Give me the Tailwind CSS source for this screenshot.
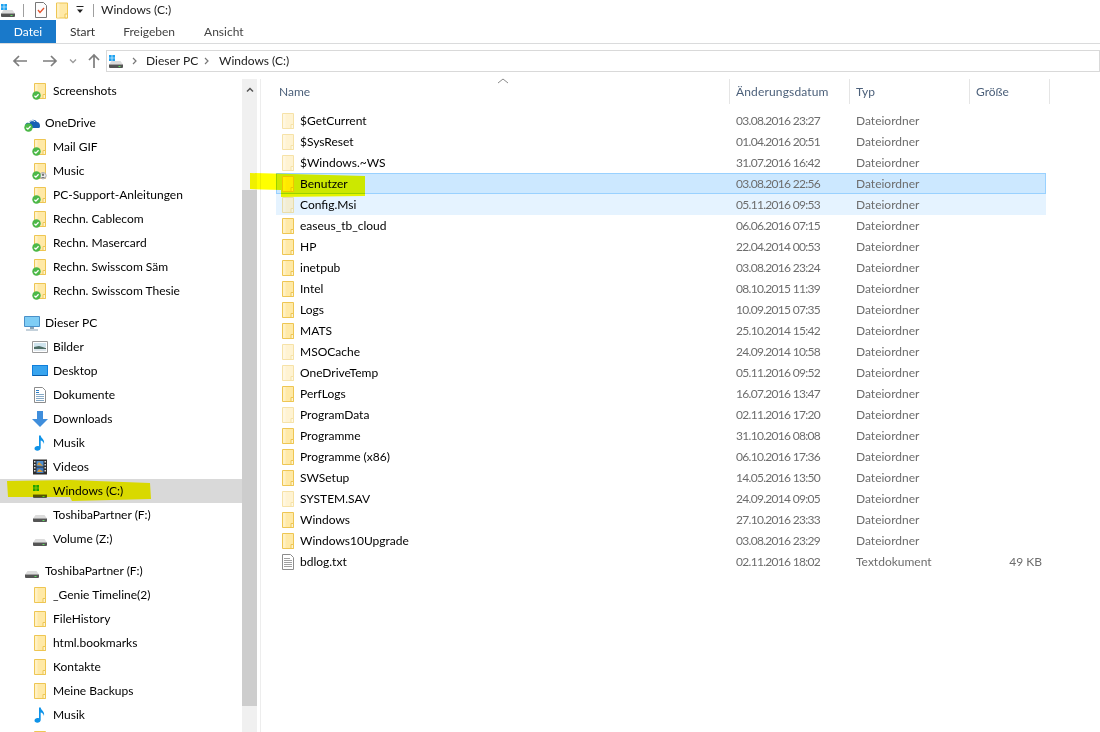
<!DOCTYPE html>
<html lang="de">
<head>
  <meta charset="UTF-8">
  <title>Windows (C:)</title>
  <script src="https://cdn.jsdelivr.net/npm/@tailwindcss/browser@4"></script>
</head>
<body class="bg-white text-black text-[12px] font-['Lato','Noto_Sans',sans-serif] overflow-hidden">
  <svg class="hidden">
    <symbol id="folder" viewBox="0 0 16 16">
      <path d="M2.500.5h11v15h-11z" fill="#ffe9a6" stroke="#eec653"/>
      <path d="M11 15.500v-4h2.500v4z" fill="#fff4cf" stroke="#eec653"/>
      <path d="M3 1h2.500v14H3z" fill="#fff1c4"/>
    </symbol>
    <symbol id="check" viewBox="0 0 10 10">
      <circle cx="5" cy="5" r="4.700" fill="#4cb848"/>
      <path d="M2.700 5.200l1.600 1.600 3-3.200" fill="none" stroke="#fff" stroke-width="1.400"/>
    </symbol>
    <symbol id="drive" viewBox="0 0 16 16">
      <path d="M3.500 8h9l2.500 3.500H1z" fill="#dcdcdc"/>
      <path d="M1 11h14v3a1 1 0 0 1-1 1H2a1 1 0 0 1-1-1z" fill="#555"/>
      <path d="M1 11h14v1H1z" fill="#a0a0a0"/>
      <path d="M10.500 13h2v1h-2z" fill="#5fe05f"/>
    </symbol>
    <symbol id="win" viewBox="0 0 16 16">
      <path d="M1 2h2.700v2.700H1zM4.300 2H7v2.700H4.300zM1 5.300h2.700V8H1zM4.300 5.300H7V8H4.300z" fill="#1fa2f0"/>
    </symbol>
    <symbol id="note" viewBox="0 0 16 16">
      <path d="M7 .5h1.700c.3 3 4.300 3.500 3.300 8.500-.5-2.500-2-3.300-3.300-3.500V13c0 1.600-1.600 2.700-3.400 2.700C3.600 15.700 2.500 14.800 2.500 13.500s1.500-2.500 3-2.500c.6 0 1.100.1 1.500.3z" fill="#0f93e8"/>
    </symbol>
  </svg>

  <div class="relative w-[1100px] h-[732px] overflow-hidden flex flex-col">
    <!-- titlebar -->
    <div class="flex items-center h-5 shrink-0">
      <svg class="w-4 h-4"><use href="#drive"/><use href="#win"/></svg>
      <div class="w-px h-[13px] bg-[#9f9f9f] ml-[7px]"></div>
      <svg class="w-4 h-4 ml-[9px]" viewBox="0 0 16 16"><path d="M2.500.5h8l3 3v12h-11z" fill="#fdfdfd" stroke="#777"/><path d="M5 8l2 2.500L11 6" fill="none" stroke="#e5512b" stroke-width="1.300"/></svg>
      <svg class="w-4 h-[17px] ml-[5px]"><use href="#folder"/></svg>
      <svg class="w-[10px] h-[10px] ml-[5px]" viewBox="0 0 10 10"><path d="M1.500 1h7v1h-7zM2 4.500h6L5 8z" fill="#222"/></svg>
      <div class="w-px h-[13px] bg-[#9f9f9f] ml-[8px]"></div>
      <span class="ml-[7px] text-[#222]">Windows (C:)</span>
    </div>

    <!-- ribbon tabs -->
    <div class="flex h-6 shrink-0 border-b border-[#dadbdc] text-[#333]">
      <div class="w-14 h-[23px] bg-[#1979ca] text-white flex items-center justify-center">Datei</div>
      <div class="ml-[14px] flex items-center h-[23px]">Start</div>
      <div class="ml-[28px] flex items-center h-[23px] text-[#444]">Freigeben</div>
      <div class="ml-[29px] flex items-center h-[23px] text-[#444]">Ansicht</div>
    </div>

    <!-- nav bar -->
    <div class="flex h-7 shrink-0 items-end">
      <div class="flex items-center h-[22px] w-[106px] text-[#8a8a8a]">
        <svg class="w-4 h-4 ml-3" viewBox="0 0 16 16"><path d="M2 8h13M7 3L2 8l5 5" fill="none" stroke="#7d7d7d" stroke-width="1.700"/></svg>
        <svg class="w-4 h-4 ml-[14px]" viewBox="0 0 16 16"><path d="M1 8h13M9 3l5 5-5 5" fill="none" stroke="#7d7d7d" stroke-width="1.700"/></svg>
        <svg class="w-2 h-2 ml-[11px]" viewBox="0 0 8 8"><path d="M1 2.500l3 3 3-3" fill="none" stroke="#9a9a9a" stroke-width="1.300"/></svg>
        <svg class="w-4 h-4 ml-[9px]" viewBox="0 0 16 16"><path d="M8 15V2M3 7l5-5 5 5" fill="none" stroke="#7d7d7d" stroke-width="1.700"/></svg>
      </div>
      <div class="flex-1 h-[22px] border border-[#d9d9d9] flex items-center text-[#222]">
        <svg class="w-4 h-4 ml-[1px]"><use href="#drive"/><use href="#win"/></svg>
        <svg class="w-2 h-2 ml-[7px]" viewBox="0 0 8 8"><path d="M2 1l3 3-3 3" fill="none" stroke="#777" stroke-width="1.200"/></svg>
        <span class="ml-[7px] w-[50px] whitespace-nowrap">Dieser PC</span>
        <svg class="w-2 h-2 ml-[7px]" viewBox="0 0 8 8"><path d="M2 1l3 3-3 3" fill="none" stroke="#777" stroke-width="1.200"/></svg>
        <span class="ml-[8px] whitespace-nowrap">Windows (C:)</span>
      </div>
    </div>

    <div class="flex flex-1 min-h-0">
      <!-- sidebar -->
      <div class="w-[242px] shrink-0 pt-[7px] overflow-hidden">
        <div class="flex items-center h-6 pl-8"><svg class="w-4 h-4 overflow-visible"><use href="#folder"/><use href="#check" x="0" y="8" width="9" height="9"/></svg><span class="ml-[5px]">Screenshots</span></div>

        <div class="flex items-center h-6 pl-6 mt-2"><svg class="w-4 h-4 overflow-visible" viewBox="0 0 16 16"><path d="M2 13c-2-3 0-6 3-5 1-4 6-4 8-1 2 0 3 2 3 4 0 1-.5 2-1 2z" fill="#1660b4"/><path d="M5 8c1-3 5-3 6-1" fill="none" stroke="#fff"/><use href="#check" x="0" y="8" width="9" height="9"/></svg><span class="ml-[5px]">OneDrive</span></div>
        <div class="flex items-center h-6 pl-8"><svg class="w-4 h-4 overflow-visible"><use href="#folder"/><use href="#check" x="0" y="8" width="9" height="9"/></svg><span class="ml-[5px]">Mail GIF</span></div>
        <div class="flex items-center h-6 pl-8"><svg class="w-4 h-4 overflow-visible" viewBox="0 0 16 16"><use href="#folder"/><circle cx="11" cy="12.700" r="3.200" fill="#eee" stroke="#aaa"/><circle cx="11" cy="11.800" r="1.200" fill="#777"/><path d="M9 15c.3-1.500 3.700-1.500 4 0z" fill="#777"/><use href="#check" x="0" y="8" width="9" height="9"/></svg><span class="ml-[5px]">Music</span></div>
        <div class="flex items-center h-6 pl-8"><svg class="w-4 h-4 overflow-visible"><use href="#folder"/><use href="#check" x="0" y="8" width="9" height="9"/></svg><span class="ml-[5px]">PC-Support-Anleitungen</span></div>
        <div class="flex items-center h-6 pl-8"><svg class="w-4 h-4 overflow-visible"><use href="#folder"/><use href="#check" x="0" y="8" width="9" height="9"/></svg><span class="ml-[5px]">Rechn. Cablecom</span></div>
        <div class="flex items-center h-6 pl-8"><svg class="w-4 h-4 overflow-visible"><use href="#folder"/><use href="#check" x="0" y="8" width="9" height="9"/></svg><span class="ml-[5px]">Rechn. Masercard</span></div>
        <div class="flex items-center h-6 pl-8"><svg class="w-4 h-4 overflow-visible"><use href="#folder"/><use href="#check" x="0" y="8" width="9" height="9"/></svg><span class="ml-[5px]">Rechn. Swisscom Säm</span></div>
        <div class="flex items-center h-6 pl-8"><svg class="w-4 h-4 overflow-visible"><use href="#folder"/><use href="#check" x="0" y="8" width="9" height="9"/></svg><span class="ml-[5px]">Rechn. Swisscom Thesie</span></div>

        <div class="flex items-center h-6 pl-6 mt-2"><svg class="w-4 h-4" viewBox="0 0 16 16"><path d="M.500 1.500h15v10H.500z" fill="#7fcdf5" stroke="#4a90c8"/><path d="M6 12h4v2H6zM2 14.500h12v1H2z" fill="#8aa4b8"/></svg><span class="ml-[5px]">Dieser PC</span></div>
        <div class="flex items-center h-6 pl-8"><svg class="w-4 h-4" viewBox="0 0 16 16"><path d="M.500 2.500h15v11H.500z" fill="#fff" stroke="#9a9a9a"/><path d="M2 4h12v4H2z" fill="#cfe4ee"/><path d="M2 8l5-1 7 2v1H2z" fill="#4e6e66"/><path d="M2 10h12v2H2z" fill="#dfe8ee"/></svg><span class="ml-[5px]">Bilder</span></div>
        <div class="flex items-center h-6 pl-8"><svg class="w-4 h-4" viewBox="0 0 16 16"><path d="M0 2h16v11H0z" fill="#0f7fdc"/><path d="M1 3h14v9H1z" fill="#38a4ee"/><path d="M1 12h14v1H1z" fill="#0a5ca8"/></svg><span class="ml-[5px]">Desktop</span></div>
        <div class="flex items-center h-6 pl-8"><svg class="w-4 h-4" viewBox="0 0 16 16"><path d="M2.500.5h8l3 3v12h-11z" fill="#fff" stroke="#8c8c8c"/><path d="M4 3h3v1H4zM4 5h3v1H4z" fill="#2c7cc4"/><path d="M4 7h8v1H4zM4 9h8v1H4zM4 11h8v1H4zM4 13h8v1H4z" fill="#86a9c6"/></svg><span class="ml-[5px]">Dokumente</span></div>
        <div class="flex items-center h-6 pl-8"><svg class="w-4 h-4" viewBox="0 0 16 16"><path d="M5 0h6v8h5l-8 8-8-8h5z" fill="#3f8edc"/></svg><span class="ml-[5px]">Downloads</span></div>
        <div class="flex items-center h-6 pl-8"><svg class="w-4 h-4"><use href="#note"/></svg><span class="ml-[5px]">Musik</span></div>
        <div class="flex items-center h-6 pl-8"><svg class="w-4 h-4" viewBox="0 0 16 16"><path d="M1 .5h14v15H1z" fill="#2d2d2d"/><path d="M2 2h1.500v1.500H2zM2 5h1.500v1.500H2zM2 8h1.500v1.500H2zM2 11h1.500v1.500H2zM12.500 2H14v1.500h-1.500zM12.500 5H14v1.500h-1.500zM12.500 8H14v1.500h-1.500zM12.500 11H14v1.500h-1.500z" fill="#ddd"/><path d="M4.500 2h7v5.500h-7z" fill="#4f8fd0"/><path d="M4.500 8.500h7V14h-7z" fill="#3d79c0"/><path d="M5 6l2-3 2 2 2 2zM5 13l2-3 2 1 2 2z" fill="#d89a38"/></svg><span class="ml-[5px]">Videos</span></div>
        <div class="flex items-center h-6 pl-8 bg-[#d9d9d9]"><svg class="w-4 h-4"><use href="#drive"/><use href="#win"/></svg><span class="ml-[5px]">Windows (C:)</span></div>
        <div class="flex items-center h-6 pl-8"><svg class="w-4 h-4"><use href="#drive"/></svg><span class="ml-[5px]">ToshibaPartner (F:)</span></div>
        <div class="flex items-center h-6 pl-8"><svg class="w-4 h-4"><use href="#drive"/></svg><span class="ml-[5px]">Volume (Z:)</span></div>

        <div class="flex items-center h-6 pl-6 mt-2"><svg class="w-4 h-4"><use href="#drive"/></svg><span class="ml-[5px]">ToshibaPartner (F:)</span></div>
        <div class="flex items-center h-6 pl-8"><svg class="w-4 h-4"><use href="#folder"/></svg><span class="ml-[5px]">_Genie Timeline(2)</span></div>
        <div class="flex items-center h-6 pl-8"><svg class="w-4 h-4"><use href="#folder"/></svg><span class="ml-[5px]">FileHistory</span></div>
        <div class="flex items-center h-6 pl-8"><svg class="w-4 h-4"><use href="#folder"/></svg><span class="ml-[5px]">html.bookmarks</span></div>
        <div class="flex items-center h-6 pl-8"><svg class="w-4 h-4"><use href="#folder"/></svg><span class="ml-[5px]">Kontakte</span></div>
        <div class="flex items-center h-6 pl-8"><svg class="w-4 h-4"><use href="#folder"/></svg><span class="ml-[5px]">Meine Backups</span></div>
        <div class="flex items-center h-6 pl-8"><svg class="w-4 h-4"><use href="#note"/></svg><span class="ml-[5px]">Musik</span></div>
        <div class="flex items-center h-6 pl-8"><svg class="w-4 h-4"><use href="#folder"/></svg></div>
      </div>

      <!-- scrollbar -->
      <div class="w-[15px] shrink-0 mt-[7px] bg-[#f0f0f0] flex flex-col">
        <div class="h-[22px] flex items-center justify-center"><svg class="w-2 h-2" viewBox="0 0 8 8"><path d="M1 5.500l3-3 3 3" fill="none" stroke="#555" stroke-width="1.500"/></svg></div>
        <div class="h-[89px]"></div>
        <div class="h-[516px] bg-[#cdcdcd]"></div>
      </div>
      <div class="w-px ml-[3px] mt-[7px] bg-[#ededed] shrink-0"></div>

      <!-- file list -->
      <div class="relative flex-1 pl-[15px] pt-[7px]">
        <svg class="absolute left-[236px] top-[5px] w-[12px] h-[8px]" viewBox="0 0 12 8"><path d="M1 6l5-4 5 4" fill="none" stroke="#8a8a8a"/></svg>
        <div class="grid grid-cols-[454px_120px_120px_80px] h-[25px] text-[#4c607a]">
          <div class="flex items-center pl-[3px] border-r border-[#e5e5e5]">Name</div>
          <div class="flex items-center pl-[6px] border-r border-[#e5e5e5] tracking-[0.15px]">Änderungsdatum</div>
          <div class="flex items-center pl-[6px] border-r border-[#e5e5e5]">Typ</div>
          <div class="flex items-center pl-[6px] border-r border-[#e5e5e5]">Größe</div>
        </div>
        <div class="mt-[6px] w-[770px] text-[#6d6d6d]">
          <div class="grid grid-cols-[454px_120px_120px_76px] h-[21px] items-center"><div class="flex items-center gap-1 pl-1 text-black"><svg class="w-4 h-4 opacity-50"><use href="#folder"/></svg>$GetCurrent</div><div class="pl-[6px] tracking-[-0.7px]">03.08.2016 23:27</div><div class="pl-[6px]">Dateiordner</div><div></div></div>
          <div class="grid grid-cols-[454px_120px_120px_76px] h-[21px] items-center"><div class="flex items-center gap-1 pl-1 text-black"><svg class="w-4 h-4 opacity-50"><use href="#folder"/></svg>$SysReset</div><div class="pl-[6px] tracking-[-0.7px]">01.04.2016 20:51</div><div class="pl-[6px]">Dateiordner</div><div></div></div>
          <div class="grid grid-cols-[454px_120px_120px_76px] h-[21px] items-center"><div class="flex items-center gap-1 pl-1 text-black"><svg class="w-4 h-4 opacity-50"><use href="#folder"/></svg>$Windows.~WS</div><div class="pl-[6px] tracking-[-0.7px]">31.07.2016 16:42</div><div class="pl-[6px]">Dateiordner</div><div></div></div>
          <div class="grid grid-cols-[454px_120px_120px_76px] h-[21px] items-center bg-[#cce8ff] outline outline-1 -outline-offset-1 outline-[#99d1ff]"><div class="flex items-center gap-1 pl-1 text-black"><svg class="w-4 h-4"><use href="#folder"/></svg>Benutzer</div><div class="pl-[6px] tracking-[-0.7px]">03.08.2016 22:56</div><div class="pl-[6px]">Dateiordner</div><div></div></div>
          <div class="grid grid-cols-[454px_120px_120px_76px] h-[21px] items-center bg-[#e5f3ff]"><div class="flex items-center gap-1 pl-1 text-black"><svg class="w-4 h-4 opacity-50"><use href="#folder"/></svg>Config.Msi</div><div class="pl-[6px] tracking-[-0.7px]">05.11.2016 09:53</div><div class="pl-[6px]">Dateiordner</div><div></div></div>
          <div class="grid grid-cols-[454px_120px_120px_76px] h-[21px] items-center"><div class="flex items-center gap-1 pl-1 text-black"><svg class="w-4 h-4"><use href="#folder"/></svg>easeus_tb_cloud</div><div class="pl-[6px] tracking-[-0.7px]">06.06.2016 07:15</div><div class="pl-[6px]">Dateiordner</div><div></div></div>
          <div class="grid grid-cols-[454px_120px_120px_76px] h-[21px] items-center"><div class="flex items-center gap-1 pl-1 text-black"><svg class="w-4 h-4"><use href="#folder"/></svg>HP</div><div class="pl-[6px] tracking-[-0.7px]">22.04.2014 00:53</div><div class="pl-[6px]">Dateiordner</div><div></div></div>
          <div class="grid grid-cols-[454px_120px_120px_76px] h-[21px] items-center"><div class="flex items-center gap-1 pl-1 text-black"><svg class="w-4 h-4"><use href="#folder"/></svg>inetpub</div><div class="pl-[6px] tracking-[-0.7px]">03.08.2016 23:24</div><div class="pl-[6px]">Dateiordner</div><div></div></div>
          <div class="grid grid-cols-[454px_120px_120px_76px] h-[21px] items-center"><div class="flex items-center gap-1 pl-1 text-black"><svg class="w-4 h-4"><use href="#folder"/></svg>Intel</div><div class="pl-[6px] tracking-[-0.7px]">08.10.2015 11:39</div><div class="pl-[6px]">Dateiordner</div><div></div></div>
          <div class="grid grid-cols-[454px_120px_120px_76px] h-[21px] items-center"><div class="flex items-center gap-1 pl-1 text-black"><svg class="w-4 h-4"><use href="#folder"/></svg>Logs</div><div class="pl-[6px] tracking-[-0.7px]">10.09.2015 07:35</div><div class="pl-[6px]">Dateiordner</div><div></div></div>
          <div class="grid grid-cols-[454px_120px_120px_76px] h-[21px] items-center"><div class="flex items-center gap-1 pl-1 text-black"><svg class="w-4 h-4"><use href="#folder"/></svg>MATS</div><div class="pl-[6px] tracking-[-0.7px]">25.10.2014 15:42</div><div class="pl-[6px]">Dateiordner</div><div></div></div>
          <div class="grid grid-cols-[454px_120px_120px_76px] h-[21px] items-center"><div class="flex items-center gap-1 pl-1 text-black"><svg class="w-4 h-4 opacity-50"><use href="#folder"/></svg>MSOCache</div><div class="pl-[6px] tracking-[-0.7px]">24.09.2014 10:58</div><div class="pl-[6px]">Dateiordner</div><div></div></div>
          <div class="grid grid-cols-[454px_120px_120px_76px] h-[21px] items-center"><div class="flex items-center gap-1 pl-1 text-black"><svg class="w-4 h-4 opacity-50"><use href="#folder"/></svg>OneDriveTemp</div><div class="pl-[6px] tracking-[-0.7px]">05.11.2016 09:52</div><div class="pl-[6px]">Dateiordner</div><div></div></div>
          <div class="grid grid-cols-[454px_120px_120px_76px] h-[21px] items-center"><div class="flex items-center gap-1 pl-1 text-black"><svg class="w-4 h-4"><use href="#folder"/></svg>PerfLogs</div><div class="pl-[6px] tracking-[-0.7px]">16.07.2016 13:47</div><div class="pl-[6px]">Dateiordner</div><div></div></div>
          <div class="grid grid-cols-[454px_120px_120px_76px] h-[21px] items-center"><div class="flex items-center gap-1 pl-1 text-black"><svg class="w-4 h-4 opacity-50"><use href="#folder"/></svg>ProgramData</div><div class="pl-[6px] tracking-[-0.7px]">02.11.2016 17:20</div><div class="pl-[6px]">Dateiordner</div><div></div></div>
          <div class="grid grid-cols-[454px_120px_120px_76px] h-[21px] items-center"><div class="flex items-center gap-1 pl-1 text-black"><svg class="w-4 h-4"><use href="#folder"/></svg>Programme</div><div class="pl-[6px] tracking-[-0.7px]">31.10.2016 08:08</div><div class="pl-[6px]">Dateiordner</div><div></div></div>
          <div class="grid grid-cols-[454px_120px_120px_76px] h-[21px] items-center"><div class="flex items-center gap-1 pl-1 text-black"><svg class="w-4 h-4"><use href="#folder"/></svg>Programme (x86)</div><div class="pl-[6px] tracking-[-0.7px]">06.10.2016 17:36</div><div class="pl-[6px]">Dateiordner</div><div></div></div>
          <div class="grid grid-cols-[454px_120px_120px_76px] h-[21px] items-center"><div class="flex items-center gap-1 pl-1 text-black"><svg class="w-4 h-4"><use href="#folder"/></svg>SWSetup</div><div class="pl-[6px] tracking-[-0.7px]">14.05.2016 13:50</div><div class="pl-[6px]">Dateiordner</div><div></div></div>
          <div class="grid grid-cols-[454px_120px_120px_76px] h-[21px] items-center"><div class="flex items-center gap-1 pl-1 text-black"><svg class="w-4 h-4 opacity-50"><use href="#folder"/></svg>SYSTEM.SAV</div><div class="pl-[6px] tracking-[-0.7px]">24.09.2014 09:05</div><div class="pl-[6px]">Dateiordner</div><div></div></div>
          <div class="grid grid-cols-[454px_120px_120px_76px] h-[21px] items-center"><div class="flex items-center gap-1 pl-1 text-black"><svg class="w-4 h-4"><use href="#folder"/></svg>Windows</div><div class="pl-[6px] tracking-[-0.7px]">27.10.2016 23:33</div><div class="pl-[6px]">Dateiordner</div><div></div></div>
          <div class="grid grid-cols-[454px_120px_120px_76px] h-[21px] items-center"><div class="flex items-center gap-1 pl-1 text-black"><svg class="w-4 h-4"><use href="#folder"/></svg>Windows10Upgrade</div><div class="pl-[6px] tracking-[-0.7px]">03.08.2016 23:29</div><div class="pl-[6px]">Dateiordner</div><div></div></div>
          <div class="grid grid-cols-[454px_120px_120px_76px] h-[21px] items-center"><div class="flex items-center gap-1 pl-1 text-black"><svg class="w-4 h-4" viewBox="0 0 16 16"><path d="M2.500.5h8l3 3v12h-11z" fill="#fff" stroke="#8c8c8c"/><path d="M4 4h6v1H4zM4 6h8v1H4zM4 8h8v1H4zM4 10h8v1H4zM4 12h8v1H4z" fill="#a0a0a0"/></svg>bdlog.txt</div><div class="pl-[6px] tracking-[-0.7px]">02.11.2016 18:02</div><div class="pl-[6px]">Textdokument</div><div class="text-right pr-1">49 KB</div></div>
        </div>
      </div>
    </div>

    <!-- marker strokes -->
    <svg class="absolute left-0 top-0 w-[1100px] h-[732px] mix-blend-multiply pointer-events-none" viewBox="0 0 1100 732">
      <path d="M7 481L70 480 150 483 151 499 72 501 70 497 8 497z" fill="#ffff00"/>
      <path d="M250 173L365 176 365 196 281 197 281 190 250 189z" fill="#ffff00"/>
    </svg>
  </div>
</body>
</html>
